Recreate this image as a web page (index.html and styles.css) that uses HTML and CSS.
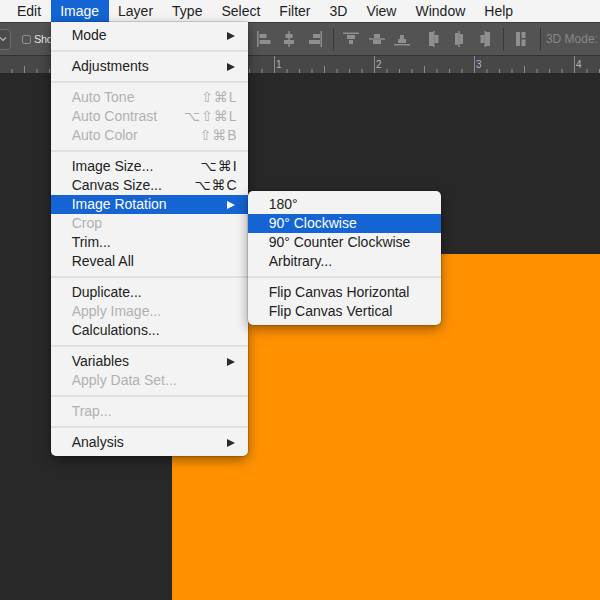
FILE: index.html
```html
<!DOCTYPE html>
<html>
<head>
<meta charset="utf-8">
<link rel="stylesheet" href="styles.css">
</head>
<body>
<div class="app">
  <nav class="menubar">
    <div class="mb-item">Edit</div>
    <div class="mb-item open">Image
      <div class="dropdown">
        <div class="row">Mode<span class="arrow"></span></div>
        <div class="sep"></div>
        <div class="row">Adjustments<span class="arrow"></span></div>
        <div class="sep"></div>
        <div class="row disabled">Auto Tone<span class="kbd">⇧⌘L</span></div>
        <div class="row disabled">Auto Contrast<span class="kbd">⌥⇧⌘L</span></div>
        <div class="row disabled">Auto Color<span class="kbd">⇧⌘B</span></div>
        <div class="sep"></div>
        <div class="row">Image Size...<span class="kbd">⌥⌘I</span></div>
        <div class="row">Canvas Size...<span class="kbd">⌥⌘C</span></div>
        <div class="row active">Image Rotation<span class="arrow"></span>
          <div class="submenu">
            <div class="row">180°</div>
            <div class="row active">90° Clockwise</div>
            <div class="row">90° Counter Clockwise</div>
            <div class="row">Arbitrary...</div>
            <div class="sep"></div>
            <div class="row">Flip Canvas Horizontal</div>
            <div class="row">Flip Canvas Vertical</div>
          </div>
        </div>
        <div class="row disabled">Crop</div>
        <div class="row">Trim...</div>
        <div class="row">Reveal All</div>
        <div class="sep"></div>
        <div class="row">Duplicate...</div>
        <div class="row disabled">Apply Image...</div>
        <div class="row">Calculations...</div>
        <div class="sep"></div>
        <div class="row">Variables<span class="arrow"></span></div>
        <div class="row disabled">Apply Data Set...</div>
        <div class="sep"></div>
        <div class="row disabled">Trap...</div>
        <div class="sep"></div>
        <div class="row">Analysis<span class="arrow"></span></div>
      </div>
    </div>
    <div class="mb-item">Layer</div>
    <div class="mb-item">Type</div>
    <div class="mb-item">Select</div>
    <div class="mb-item">Filter</div>
    <div class="mb-item">3D</div>
    <div class="mb-item">View</div>
    <div class="mb-item">Window</div>
    <div class="mb-item">Help</div>
  </nav>

  <div class="toolbar">
    <div class="tb-left">
      <div class="tb-select"><svg width="8" height="6" viewBox="0 0 8 6"><path d="M1 1.5 L4 4.5 L7 1.5" fill="none" stroke="#bdbdbd" stroke-width="1.2"/></svg></div>
      <div class="tb-check"></div>
      <span class="tb-label">Sho</span>
    </div>
    <div class="tb-group first">
      <svg class="ic" viewBox="0 0 16 16"><rect x="1" y="0" width="1.5" height="16"/><rect x="3.5" y="3" width="7" height="4"/><rect x="3.5" y="9" width="11" height="4"/></svg>
      <svg class="ic" viewBox="0 0 16 16"><rect x="7.25" y="0" width="1.5" height="16"/><rect x="4.5" y="3" width="7" height="4"/><rect x="3" y="9" width="10" height="4"/></svg>
      <svg class="ic" viewBox="0 0 16 16"><rect x="13.5" y="0" width="1.5" height="16"/><rect x="6" y="3" width="7" height="4"/><rect x="2" y="9" width="11" height="4"/></svg>
    </div>
    <div class="tb-sep"></div>
    <div class="tb-group">
      <svg class="ic" viewBox="0 0 16 16"><rect x="0" y="1.5" width="16" height="1.5"/><rect x="4" y="4" width="8" height="4"/><rect x="6" y="9" width="4" height="4"/></svg>
      <svg class="ic" viewBox="0 0 16 16"><rect x="0" y="7.25" width="16" height="1.5"/><rect x="5" y="3" width="6" height="4"/><rect x="4" y="9" width="8" height="4"/></svg>
      <svg class="ic" viewBox="0 0 16 16"><rect x="0" y="13" width="16" height="1.5"/><rect x="6" y="4" width="4" height="4"/><rect x="4" y="8" width="8" height="4"/></svg>
    </div>
    <div class="tb-group g3">
      <svg class="ic" viewBox="0 0 16 16"><rect x="3" y="1" width="4" height="14"/><rect x="7" y="0" width="1.5" height="16"/><rect x="8.5" y="4" width="4" height="8"/></svg>
      <svg class="ic" viewBox="0 0 16 16"><rect x="4" y="2" width="3.5" height="12"/><rect x="7.25" y="0" width="1.5" height="16"/><rect x="8.5" y="3" width="3.5" height="10"/></svg>
      <svg class="ic" viewBox="0 0 16 16"><rect x="3.5" y="4" width="4" height="8"/><rect x="7.5" y="0" width="1.5" height="16"/><rect x="9" y="1" width="4" height="14"/></svg>
    </div>
    <div class="tb-sep"></div>
    <div class="tb-group">
      <svg class="ic" viewBox="0 0 16 16"><rect x="3" y="1" width="4" height="14"/><rect x="8.5" y="1" width="4" height="6"/><rect x="8.5" y="8.5" width="4" height="6.5"/></svg>
    </div>
    <div class="tb-sep"></div>
    <span class="tb-mode">3D Mode:</span>
  </div>

  <div class="ruler">
    <svg width="600" height="17" viewBox="0 0 600 17">
      <defs>
        <pattern id="ticks" x="274" y="0" width="100" height="17" patternUnits="userSpaceOnUse">
          <rect x="0" y="0" width="1" height="17" fill="#8d8d8d"/>
          <rect x="12.5" y="13" width="1" height="4" fill="#8d8d8d"/>
          <rect x="25" y="13" width="1" height="4" fill="#8d8d8d"/>
          <rect x="37.5" y="13" width="1" height="4" fill="#8d8d8d"/>
          <rect x="50" y="10" width="1" height="7" fill="#8d8d8d"/>
          <rect x="62.5" y="13" width="1" height="4" fill="#8d8d8d"/>
          <rect x="75" y="13" width="1" height="4" fill="#8d8d8d"/>
          <rect x="87.5" y="13" width="1" height="4" fill="#8d8d8d"/>
        </pattern>
      </defs>
      <rect width="600" height="17" fill="url(#ticks)"/>
      <text x="276" y="12" class="rnum">1</text>
      <text x="376" y="12" class="rnum">2</text>
      <text x="476" y="12" class="rnum">3</text>
      <text x="576" y="12" class="rnum">4</text>
    </svg>
  </div>

  <div class="workspace">
    <div class="doc"></div>
  </div>
</div>
</body>
</html>
```

FILE: styles.css
```css
* { box-sizing: border-box; }
html, body {
  margin: 0;
  padding: 0;
  width: 600px;
  height: 600px;
  overflow: hidden;
  font-family: "Liberation Sans", Arial, "DejaVu Sans", sans-serif;
}
.app {
  width: 600px;
  height: 600px;
  display: flex;
  flex-direction: column;
  background: #282828;
}

/* menu bar */
.menubar {
  height: 22px;
  flex: 0 0 22px;
  display: flex;
  padding-left: 7.5px;
  background: #f4f4f4;
  font-size: 14px;
  line-height: 22px;
  color: #1e1e1e;
  position: relative;
  z-index: 10;
}
.mb-item {
  padding: 0 9.5px;
  white-space: nowrap;
}
.mb-item.open {
  position: relative;
  background: #1464d4;
  color: #fff;
}

/* dropdown menus */
.dropdown {
  position: absolute;
  left: 0;
  top: 22px;
  width: 197px;
  padding: 4px 0;
  background: #f3f3f3;
  color: #222;
  border-radius: 0 0 5px 5px;
  box-shadow: 0 4px 12px rgba(0,0,0,0.4), 0 0 0 0.5px rgba(0,0,0,0.25);
}
.row {
  position: relative;
  display: flex;
  align-items: center;
  justify-content: space-between;
  height: 19px;
  line-height: 19px;
  padding: 0 11px 0 21px;
  font-size: 14px;
  white-space: nowrap;
}
.row.disabled { color: #b1b1b1; }
.row.active { background: #1464d4; color: #fff; }
.sep {
  height: 2px;
  margin: 5px 0;
  background: #e0e0e0;
}
.arrow {
  width: 0;
  height: 0;
  margin-right: 2px;
  border-left: 8px solid #2a2a2a;
  border-top: 4.5px solid transparent;
  border-bottom: 4.5px solid transparent;
}
.row.active > .arrow { border-left-color: #fff; }
.kbd {
  font-family: "Liberation Sans", "DejaVu Sans", sans-serif;
  letter-spacing: 1px;
  margin-right: -1px;
}
.submenu {
  position: absolute;
  left: 100%;
  top: -4px;
  width: 193px;
  padding: 4px 0;
  background: #f3f3f3;
  color: #222;
  border-radius: 5px;
  box-shadow: 0 4px 12px rgba(0,0,0,0.4), 0 0 0 0.5px rgba(0,0,0,0.25);
}

/* toolbar */
.toolbar {
  height: 34px;
  flex: 0 0 34px;
  display: flex;
  align-items: center;
  background: #535353;
  border-bottom: 1px solid #333;
  border-top: 1px solid #3c3c3c;
}
.tb-left {
  flex: 0 0 51px;
  display: flex;
  align-items: center;
  white-space: nowrap;
}
.tb-select {
  flex: 0 0 17px;
  width: 17px;
  height: 21px;
  margin-left: -6px;
  border: 1px solid #6e6e6e;
  border-radius: 4px;
  background: #4a4a4a;
  display: flex;
  align-items: center;
  justify-content: flex-end;
  padding-right: 3px;
}
.tb-check {
  flex: 0 0 9px;
  width: 9px;
  height: 9px;
  margin-left: 11px;
  border: 1px solid #8e8e8e;
  border-radius: 2px;
}
.tb-label {
  margin-left: 3px;
  font-size: 11px;
  letter-spacing: -0.4px;
  color: #e6e6e6;
}
.tb-group {
  display: flex;
  align-items: center;
  gap: 9.5px;
}
.tb-group.first { margin-left: 203.5px; }
.tb-group.g3 { margin-left: 15.5px; }
.ic {
  width: 16px;
  height: 16px;
  fill: #8f8f8f;
}
.tb-sep {
  width: 1px;
  height: 23px;
  background: #383838;
  margin: 0 9px 0 10.5px;
}
.tb-mode {
  margin-left: -4px;
  font-size: 12px;
  color: #878787;
  white-space: nowrap;
}

/* ruler */
.ruler {
  height: 17px;
  flex: 0 0 17px;
  background: #474747;
}
.ruler svg { display: block; }
.rnum {
  font-family: "Liberation Sans", Arial, sans-serif;
  font-size: 10px;
  fill: #a9bacb;
}

/* workspace */
.workspace {
  flex: 1;
  background: #282828;
  padding: 181px 0 0 172px;
  overflow: hidden;
}
.doc {
  width: 428px;
  height: 400px;
  background: #ff9100;
}
```
